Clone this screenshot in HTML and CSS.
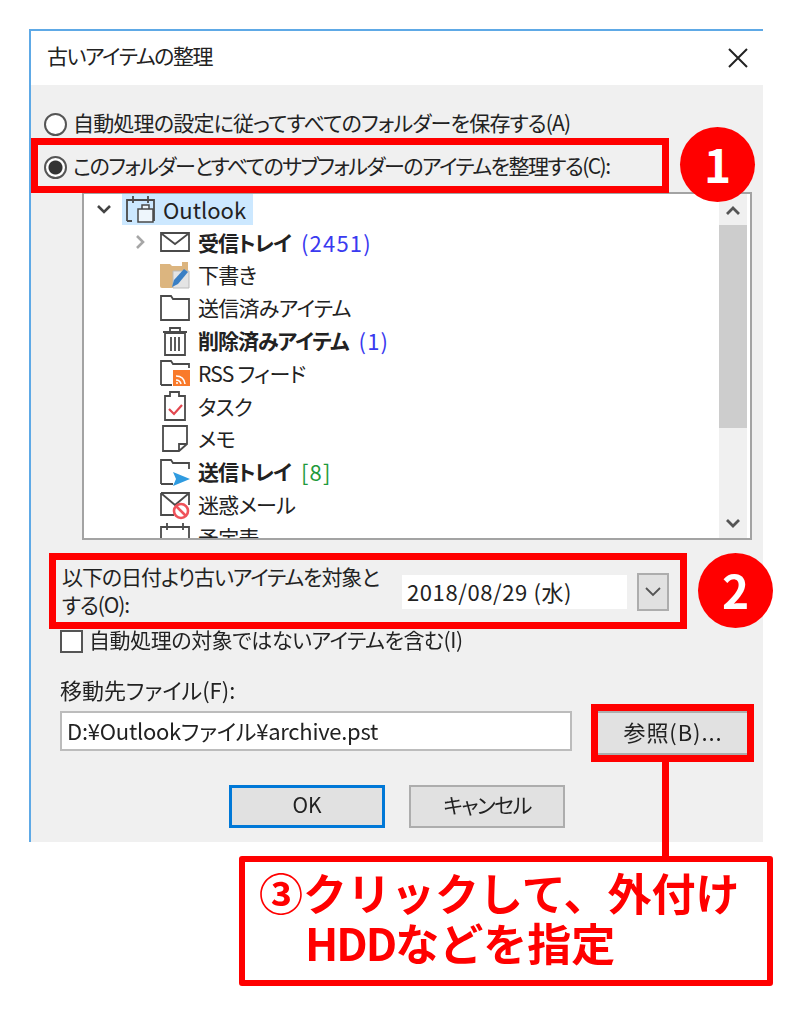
FILE: index.html
```html
<!DOCTYPE html>
<html lang="ja">
<head>
<meta charset="utf-8">
<title>古いアイテムの整理</title>
<link rel="stylesheet" href="styles.css">
</head>
<body>
<main class="page">
  <section class="dialog">
    <header class="titlebar">
      <h1 class="title">古いアイテムの整理</h1>
      <svg class="close" viewBox="0 0 20 20"><path d="M1 1L19 19M19 1L1 19"/></svg>
    </header>
    <div class="content">
      <div class="option option-first"><span class="radio"></span><span class="t-a">自動処理の設定に従ってすべてのフォルダーを保存する(A)</span></div>
      <div class="option option-second"><span class="radio radio-on"></span><span class="t-c">このフォルダーとすべてのサブフォルダーのアイテムを整理する(C):</span></div>

      <div class="tree">
        <ul class="tree-list">
          <li class="row row-root">
            <svg class="chev" viewBox="0 0 16 16"><path d="M2 5L8 11L14 5"/></svg>
            <span class="selected">
              <svg class="ico" viewBox="0 0 30 30"><path d="M1 27V6H28V27M1 27H6M7 2V9M22 2V9M1 6"/><path class="thin" d="M12 28V15H27V28ZM16 15V11H23V15" /></svg>
              <span>Outlook</span>
            </span>
          </li>
          <li class="row row-child">
            <svg class="chev chev-light" viewBox="0 0 16 16"><path d="M5 2L11 8L5 14"/></svg>
            <svg class="ico" viewBox="0 0 30 30"><path d="M1 6H29V24H1ZM2 7L15 17L28 7"/></svg>
            <span class="b">受信トレイ</span><span class="count">(2451)</span>
          </li>
          <li class="row row-leaf">
            <svg class="ico" viewBox="0 0 30 30"><path class="fill-tan" d="M0 4H10L12 6H22V2H28V14H16V28H2Q0 28 0 26Z"/><path class="fill-paper" d="M13 11H29V28H13Z"/><path class="fill-blue" d="M12 27L14 20L24 9L28 12L18 24Z"/></svg>
            <span>下書き</span>
          </li>
          <li class="row row-leaf">
            <svg class="ico" viewBox="0 0 30 30"><path d="M1 27V3H11L13 6H29V27Z"/></svg>
            <span>送信済みアイテム</span>
          </li>
          <li class="row row-leaf">
            <svg class="ico" viewBox="0 0 30 30"><path d="M5 7H25V29H5ZM3 6H27M10 6V2H20V6M11 11V25M15 11V25M19 11V25"/></svg>
            <span class="b">削除済みアイテム</span><span class="count">(1)</span>
          </li>
          <li class="row row-leaf">
            <svg class="ico" viewBox="0 0 30 30"><path d="M1 27V3H11L13 6H29V10M1 27H12"/><rect class="fill-orange" x="13" y="12" width="17" height="16"/><path class="rss" d="M16 18Q24 18 25 26M16 22Q20 22 21 26M16 25H18"/></svg>
            <span>RSS フィード</span>
          </li>
          <li class="row row-leaf">
            <svg class="ico" viewBox="0 0 30 30"><path d="M5 5H10V1H19V5H25V29H5Z"/><path class="check" d="M9 18L14 23L22 14"/></svg>
            <span>タスク</span>
          </li>
          <li class="row row-leaf">
            <svg class="ico" viewBox="0 0 30 30"><path d="M3 2H27V20L19 27H3ZM19 27V20H27"/></svg>
            <span>メモ</span>
          </li>
          <li class="row row-leaf">
            <svg class="ico" viewBox="0 0 30 30"><path d="M1 27V3H11L13 6H29V12M1 27H13"/><path class="fill-sky" d="M13 15L30 22L13 29L16 22Z"/></svg>
            <span class="b">送信トレイ</span><span class="count count-green">[8]</span>
          </li>
          <li class="row row-leaf">
            <svg class="ico" viewBox="0 0 30 30"><path d="M1 3H29V15M1 3V25H14M2 4L15 15L28 4"/><circle class="no" cx="21" cy="21" r="7"/><path class="no" d="M16 16L26 26"/></svg>
            <span>迷惑メール</span>
          </li>
          <li class="row row-leaf">
            <svg class="ico" viewBox="0 0 30 30"><path d="M1 28V5H29V28M7 1V8M23 1V8"/></svg>
            <span>予定表</span>
          </li>
        </ul>
        <div class="scrollbar">
          <svg class="arrow" viewBox="0 0 16 16"><path d="M2 11L8 5L14 11"/></svg>
          <div class="thumb"></div>
          <svg class="arrow arrow-down" viewBox="0 0 16 16"><path d="M2 5L8 11L14 5"/></svg>
        </div>
      </div>

      <div class="date-row">
        <label class="date-label">以下の日付より古いアイテムを対象と<br>する(O):</label>
        <div class="date-value">2018/08/29 (水)</div>
        <div class="date-btn"><svg class="date-chev" viewBox="0 0 16 10"><path d="M1 1L8 8L15 1"/></svg></div>
      </div>

      <div class="check-row"><span class="checkbox"></span><span class="check-text">自動処理の対象ではないアイテムを含む(I)</span></div>

      <div class="file-label">移動先ファイル(F):</div>
      <div class="file-row">
        <div class="file-input">D:¥Outlookファイル¥archive.pst</div>
        <div class="btn btn-browse"><span class="btn-text btn-text-browse">参照(B)...</span></div>
      </div>

      <div class="actions">
        <div class="btn btn-action btn-default"><span class="btn-text">OK</span></div>
        <div class="btn btn-action"><span class="btn-text btn-text-cancel">キャンセル</span></div>
      </div>
    </div>
  </section>

  <div class="mark mark-one"></div>
  <div class="badge badge-one">1</div>
  <div class="mark mark-two"></div>
  <div class="badge badge-two">2</div>
  <div class="mark mark-three"></div>
  <div class="connector"></div>

  <div class="callout">
    <p class="callout-line">③クリックして、外付け</p>
    <p class="callout-line callout-indent"><span class="hdd">HDD</span>などを指定</p>
  </div>
</main>
</body>
</html>
```

FILE: styles.css
```css
* { box-sizing: border-box; }
html, body { margin: 0; padding: 0; background: #fff; }
.page {
  position: relative;
  width: 800px;
  height: 1022px;
  overflow: hidden;
  padding: 29px 0 0 29px;
  font-family: "Noto Sans CJK JP", "Noto Sans", sans-serif;
  font-feature-settings: "palt";
  font-size: 21px;
  line-height: 1.3;
  color: #222;
  filter: blur(.4px);
}
.dialog {
  width: 734px;
  height: 813px;
  border-top: 2px solid #5ea9e6;
  border-left: 2px solid #5ea9e6;
  display: flex;
  flex-direction: column;
  background: #fff;
}
.titlebar {
  height: 54px;
  flex: none;
  display: flex;
  align-items: center;
  justify-content: space-between;
  padding: 0 15px 0 16px;
}
.title { margin: 0 0 4px; font-size: 21px; font-weight: 400; letter-spacing: -1.4px; }
.close { width: 20px; height: 20px; fill: none; stroke: #222; stroke-width: 2; }
.content { flex: 1; background: #f0f0f0; display: flex; flex-direction: column; }

.option { height: 34px; display: flex; align-items: center; padding-left: 13px; gap: 6px; }
.option-first { margin-top: 22px; }
.option-second { margin-top: 9px; }
.radio {
  width: 23px; height: 23px; flex: none;
  border-radius: 50%;
  border: 2px solid #555;
  background: #fff;
}
.radio-on { background: radial-gradient(circle, #333 0 6.5px, #fff 7.5px); }
.t-a { letter-spacing: -.8px; margin-bottom: 2px; }
.t-c { letter-spacing: -1.52px; margin-bottom: 2px; }

.tree {
  margin: 8px 0 0 51px;
  width: 670px;
  height: 348px;
  border: 2px solid #a3a3a3;
  background: #fff;
  display: flex;
  padding-right: 3px;
}
.tree-list { flex: 1; margin: 0; padding: 0; list-style: none; overflow: hidden; min-width: 0; }
.row {
  height: 32.8px; display: flex; align-items: center; white-space: nowrap;
  letter-spacing: -.7px; padding-bottom: 2px;
}
.row-root { padding-left: 12px; font-size: 22px; letter-spacing: 0; }
.row-child { padding-left: 48px; gap: 8px; }
.row-child .chev { margin-right: 4px; }
.row-leaf { padding-left: 76px; gap: 8px; }
.selected {
  display: flex; align-items: center; gap: 7px;
  height: 32px; padding: 0 7px 0 4px; margin-left: 10px;
  background: #cce8ff;
}
.chev { width: 16px; height: 16px; flex: none; fill: none; stroke: #444; stroke-width: 2.6; }
.chev-light { stroke: #a6a6a6; }
.ico { width: 30px; height: 30px; flex: none; fill: none; stroke: #4a4a4a; stroke-width: 1.8; }
.ico .thin { stroke-width: 1.5; fill: #eef6fc; }
.ico .fill-tan { fill: #dcb57f; stroke: none; }
.ico .fill-paper { fill: #e4e4e4; stroke: #bbb; stroke-width: 1; }
.ico .fill-blue { fill: #3a7fc4; stroke: none; }
.ico .fill-orange { fill: #f97a2b; stroke: none; }
.ico .rss { stroke: #fff; stroke-width: 1.6; }
.ico .check { stroke: #e2474f; stroke-width: 2.2; }
.ico .fill-sky { fill: #2f9be0; stroke: none; }
.ico .no { stroke: #f0525a; stroke-width: 2.6; fill: #fff; }
.b { font-weight: 700; letter-spacing: -1px; }
.count { color: #3a3af0; font-size: 22px; letter-spacing: 1.2px; margin-left: 2px; }
.count-green { color: #1f9a3c; }

.scrollbar { width: 28px; flex: none; background: #f0f0f0; display: flex; flex-direction: column; align-items: center; }
.arrow { width: 16px; height: 16px; flex: none; margin: 9px 0 6px; fill: none; stroke: #555; stroke-width: 2.8; }
.arrow-down { margin: auto 0 7px; }
.thumb { width: 100%; height: 203px; flex: none; background: #cdcdcd; }

.date-row { margin: 24px 0 0 31px; width: 608px; height: 56px; display: flex; align-items: center; }
.date-label { width: 340px; flex: none; line-height: 28px; letter-spacing: -1.08px; white-space: nowrap; margin-bottom: 4px; }
.date-value {
  width: 225px; height: 34px; flex: none; background: #fff; font-size: 22px;
  display: flex; align-items: center; padding: 0 0 2px 5px; letter-spacing: .6px;
}
.date-btn {
  width: 32px; height: 38px; flex: none; margin-left: 10px;
  background: #e1e1e1; border: 2px solid #adadad;
  display: flex; align-items: center; justify-content: center;
}
.date-chev { width: 16px; height: 10px; fill: none; stroke: #555; stroke-width: 1.8; }

.check-row { margin: 10px 0 0 29px; height: 22px; display: flex; align-items: center; gap: 6px; white-space: nowrap; }
.check-text { letter-spacing: -.42px; margin-bottom: 2px; }
.checkbox { width: 23px; height: 23px; flex: none; background: #fff; border: 2px solid #555; }

.file-label { margin: 22px 0 0 29px; height: 30px; line-height: 30px; font-size: 22px; }
.file-row { margin: 7px 0 0 29px; display: flex; align-items: flex-start; }
.file-input {
  width: 512px; height: 40px; flex: none; font-size: 22px;
  background: #fff; border: 2px solid #bcbcbc;
  display: flex; align-items: center; padding: 0 0 2px 5px; letter-spacing: -.25px;
}
.btn {
  background: #e1e1e1; border: 2px solid #adadad;
  display: flex; align-items: center; justify-content: center;
  flex: none;
}
.btn-text { margin-bottom: 4px; }
.btn-text-browse { font-size: 22px; letter-spacing: .9px; margin-right: 2px; }
.btn-text-cancel { letter-spacing: -1.5px; }
.btn-browse { width: 156px; height: 44px; margin-left: 24px; }
.actions { margin: 30px 0 0 198px; display: flex; gap: 24px; }
.btn-action { width: 156px; height: 43px; }
.btn-default { border: 3px solid #0078d7; }

.mark { position: absolute; border: 7px solid #f00; }
.mark-one { left: 31px; top: 138px; width: 638px; height: 55px; }
.mark-two { left: 49px; top: 553px; width: 638px; height: 76px; }
.mark-three { left: 591px; top: 704px; width: 163px; height: 58px; }
.connector { position: absolute; left: 662px; top: 762px; width: 7px; height: 96px; background: #f00; }
.badge {
  position: absolute; width: 75px; height: 75px; border-radius: 50%;
  background: #f00; color: #fff; font-weight: 700; font-size: 46px;
  display: flex; align-items: center; justify-content: center;
  line-height: 1; padding-bottom: 3px;
}
.badge-one { left: 680px; top: 127px; }
.badge-two { left: 698px; top: 553px; }

.callout {
  width: 534px; height: 130px;
  margin: 14px 0 0 210px;
  border: 6px solid #f00; border-radius: 3px;
  color: #f00; font-weight: 700; font-size: 44px; line-height: 50px;
  padding: 5px 0 0 14px;
  background: #fff;
}
.callout-line { margin: 0; white-space: nowrap; font-feature-settings: normal; }
.callout-indent { padding-left: 46px; }
.hdd { letter-spacing: -2px; }
```
